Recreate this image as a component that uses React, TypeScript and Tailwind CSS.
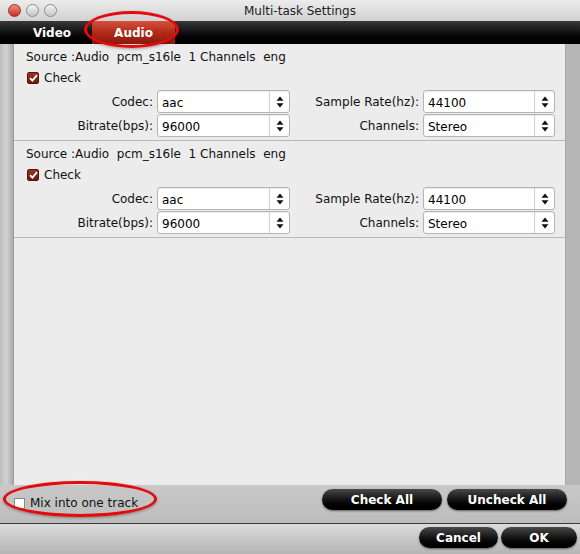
import React from "react";

const font = { fontFamily: '"DejaVu Sans", "Liberation Sans", sans-serif' };

function Stepper() {
  return (
    <svg width="8" height="12" viewBox="0 0 8 12">
      <path d="M4 0.5 L7.5 4.8 L0.5 4.8 Z" fill="#111" />
      <path d="M4 11.5 L7.5 7.2 L0.5 7.2 Z" fill="#111" />
    </svg>
  );
}

function Field({ value, width }: { value: string; width: string }) {
  return (
    <div
      className={`flex h-[23px] ${width} items-stretch rounded-[3px] border border-[#b4b4b4] bg-white shadow-[inset_0_1px_1px_rgba(0,0,0,0.08)]`}
    >
      <div className="flex flex-1 items-center pl-[4px] pt-[2px] text-[12px] text-black">{value}</div>
      <div className="flex w-[20px] items-center justify-center border-l border-[#cfcfcf]">
        <Stepper />
      </div>
    </div>
  );
}

function RedCheck() {
  return (
    <div className="flex h-[12px] w-[12px] items-center justify-center rounded-[2px] border border-[#5a1208] bg-gradient-to-b from-[#9a3322] to-[#6c1a0e]">
      <svg width="9" height="8" viewBox="0 0 9 8">
        <path d="M1 4.2 L3.4 6.6 L8 1.2" stroke="#fff" strokeWidth="1.8" fill="none" />
      </svg>
    </div>
  );
}

function TrackSection() {
  return (
    <div className="flex h-[97px] flex-col border-b border-[#b8b8b8] pt-[5px] text-[12px] text-[#111]">
      <div className="h-[16px] pl-[12px] leading-[16px] whitespace-pre">
        {"Source :Audio  pcm_s16le  1 Channels  eng"}
      </div>
      <div className="mt-[5px] flex h-[16px] items-center gap-[5px] pl-[13px]">
        <RedCheck />
        <span>Check</span>
      </div>
      <div className="mt-[4px] flex flex-col gap-[1px]">
        <div className="flex items-center">
          <div className="w-[143px] pr-[4px] text-right">Codec:</div>
          <Field value="aac" width="w-[133px]" />
          <div className="w-[133px] pr-[4px] text-right">Sample Rate(hz):</div>
          <Field value="44100" width="w-[132px]" />
        </div>
        <div className="flex items-center">
          <div className="w-[143px] pr-[4px] text-right">Bitrate(bps):</div>
          <Field value="96000" width="w-[133px]" />
          <div className="w-[133px] pr-[4px] text-right">Channels:</div>
          <Field value="Stereo" width="w-[132px]" />
        </div>
      </div>
    </div>
  );
}

function PillButton({ label, width }: { label: string; width: string }) {
  return (
    <button
      className={`${width} h-[21px] rounded-full bg-gradient-to-b from-[#4a4a4a] via-[#151515] to-[#000] text-[12px] font-bold text-white shadow-[0_1px_2px_rgba(0,0,0,0.5)]`}
    >
      {label}
    </button>
  );
}

function Light({ color }: { color: string }) {
  return <div className={`h-[13px] w-[13px] rounded-full border border-[#8a8a8a] ${color}`} />;
}

export default function App() {
  return (
    <div className="relative flex h-[554px] w-[580px] flex-col overflow-hidden bg-[#c4c4c4]" style={font}>
      {/* title bar */}
      <div className="relative flex h-[21px] items-center bg-gradient-to-b from-[#ececec] to-[#d2d2d2]">
        <div className="absolute left-[8px] top-[4px] flex gap-[5px]">
          <Light color="bg-gradient-to-b from-[#f08a80] to-[#c8281c] border-[#a52a20]" />
          <Light color="bg-gradient-to-b from-[#f4f4f4] to-[#c6c6c6]" />
          <Light color="bg-gradient-to-b from-[#f4f4f4] to-[#c6c6c6]" />
        </div>
        <div className="w-full pl-[20px] text-center text-[12px] text-[#222]">Multi-task Settings</div>
      </div>

      {/* tab strip */}
      <div className="flex h-[23px] items-stretch bg-gradient-to-b from-[#3a3a3a] via-[#121212] to-[#000] pl-[12px] text-[12px] font-bold text-white">
        <div className="flex w-[80px] items-center justify-center">Video</div>
        <div className="flex w-[83px] items-center justify-center rounded-t-[3px] bg-gradient-to-b from-[#d4503c] via-[#b22a18] to-[#8a1a0c]">
          Audio
        </div>
      </div>

      {/* body */}
      <div className="flex h-[441px]">
        <div className="w-[14px] border-r border-[#9c9c9c] bg-gradient-to-r from-[#bdbdbd] via-[#d2d2d2] to-[#aaaaaa]" />
        <div className="flex w-[552px] flex-col border-r border-[#a8a8a8] bg-[#ececec]">
          <TrackSection />
          <TrackSection />
        </div>
        <div className="flex-1 bg-[#b6b6b6]" />
      </div>

      {/* actions below list */}
      <div className="flex h-[38px] items-start bg-gradient-to-b from-[#c8c8c8] to-[#bdbdbd]">
        <div className="ml-[14px] mt-[9px] flex items-center gap-[5px] text-[12px] text-[#111]">
          <div className="h-[11px] w-[11px] border border-[#8a8a8a] bg-white" />
          <span>Mix into one track</span>
        </div>
        <div className="ml-auto mr-[13px] mt-[4px] flex gap-[5px]">
          <PillButton label="Check All" width="w-[120px]" />
          <PillButton label="Uncheck All" width="w-[120px]" />
        </div>
      </div>

      <div className="h-px bg-[#3a3a3a]" />

      {/* dialog buttons */}
      <div className="flex flex-1 items-start justify-end gap-[3px] bg-gradient-to-b from-[#dcdcdc] to-[#b4b4b4] pr-[3px] pt-[3px]">
        <PillButton label="Cancel" width="w-[79px]" />
        <PillButton label="OK" width="w-[76px]" />
      </div>

      {/* highlight rings */}
      <div className="absolute left-[84px] top-[11px] h-[37px] w-[95px] rounded-[50%] border-[3px] border-[#e30b0b] shadow-[0_1px_3px_rgba(0,0,0,0.35)]" />
      <div className="absolute left-[3px] top-[481px] h-[36px] w-[154px] rounded-[50%] border-[3px] border-[#e30b0b] shadow-[0_1px_3px_rgba(0,0,0,0.35)]" />
    </div>
  );
}
